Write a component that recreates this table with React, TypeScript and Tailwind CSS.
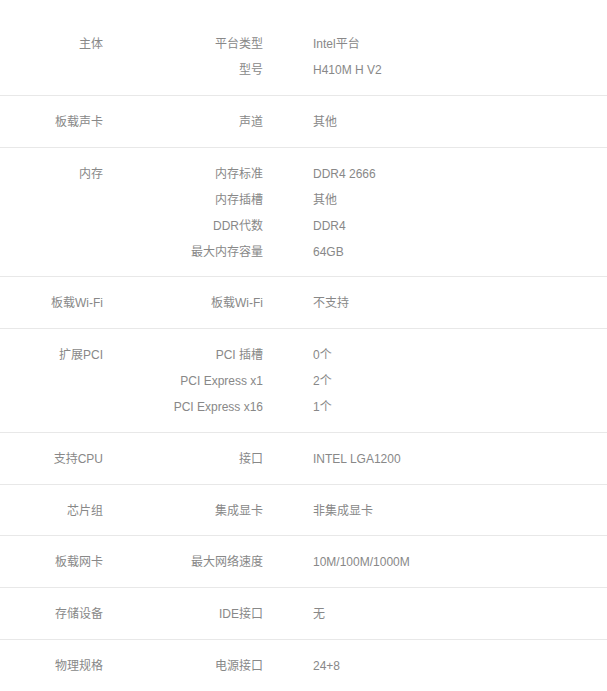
import React from 'react';

type Group = { name: string; items: [string, string][] };

const groups: Group[] = [
    { name: '主体', items: [['平台类型', 'Intel平台'], ['型号', 'H410M H V2']] },
    { name: '板载声卡', items: [['声道', '其他']] },
    {
        name: '内存',
        items: [
            ['内存标准', 'DDR4 2666'],
            ['内存插槽', '其他'],
            ['DDR代数', 'DDR4'],
            ['最大内存容量', '64GB'],
        ],
    },
    { name: '板载Wi-Fi', items: [['板载Wi-Fi', '不支持']] },
    {
        name: '扩展PCI',
        items: [
            ['PCI 插槽', '0个'],
            ['PCI Express x1', '2个'],
            ['PCI Express x16', '1个'],
        ],
    },
    { name: '支持CPU', items: [['接口', 'INTEL LGA1200']] },
    { name: '芯片组', items: [['集成显卡', '非集成显卡']] },
    { name: '板载网卡', items: [['最大网络速度', '10M/100M/1000M']] },
    { name: '存储设备', items: [['IDE接口', '无']] },
    { name: '物理规格', items: [['电源接口', '24+8']] },
];

export default function App() {
    return (
        <div
            className="w-[607px] bg-white pt-[18px] text-[12px] text-[#888]"
            style={{ fontFamily: '"Liberation Sans", "Noto Sans CJK SC", sans-serif' }}
        >
            {groups.map((g) => (
                <div key={g.name} className="grid grid-cols-[103px_160px_1fr] pt-[13px] pb-[11.75px] border-b border-[#e8e8e8]">
                    <div className="text-right leading-[26px]">{g.name}</div>
                    <div>
                        {g.items.map(([k]) => (
                            <div key={k} className="text-right leading-[26px]">{k}</div>
                        ))}
                    </div>
                    <div className="pl-[50px]">
                        {g.items.map(([k, v]) => (
                            <div key={k} className="leading-[26px]">{v}</div>
                        ))}
                    </div>
                </div>
            ))}
        </div>
    );
}
